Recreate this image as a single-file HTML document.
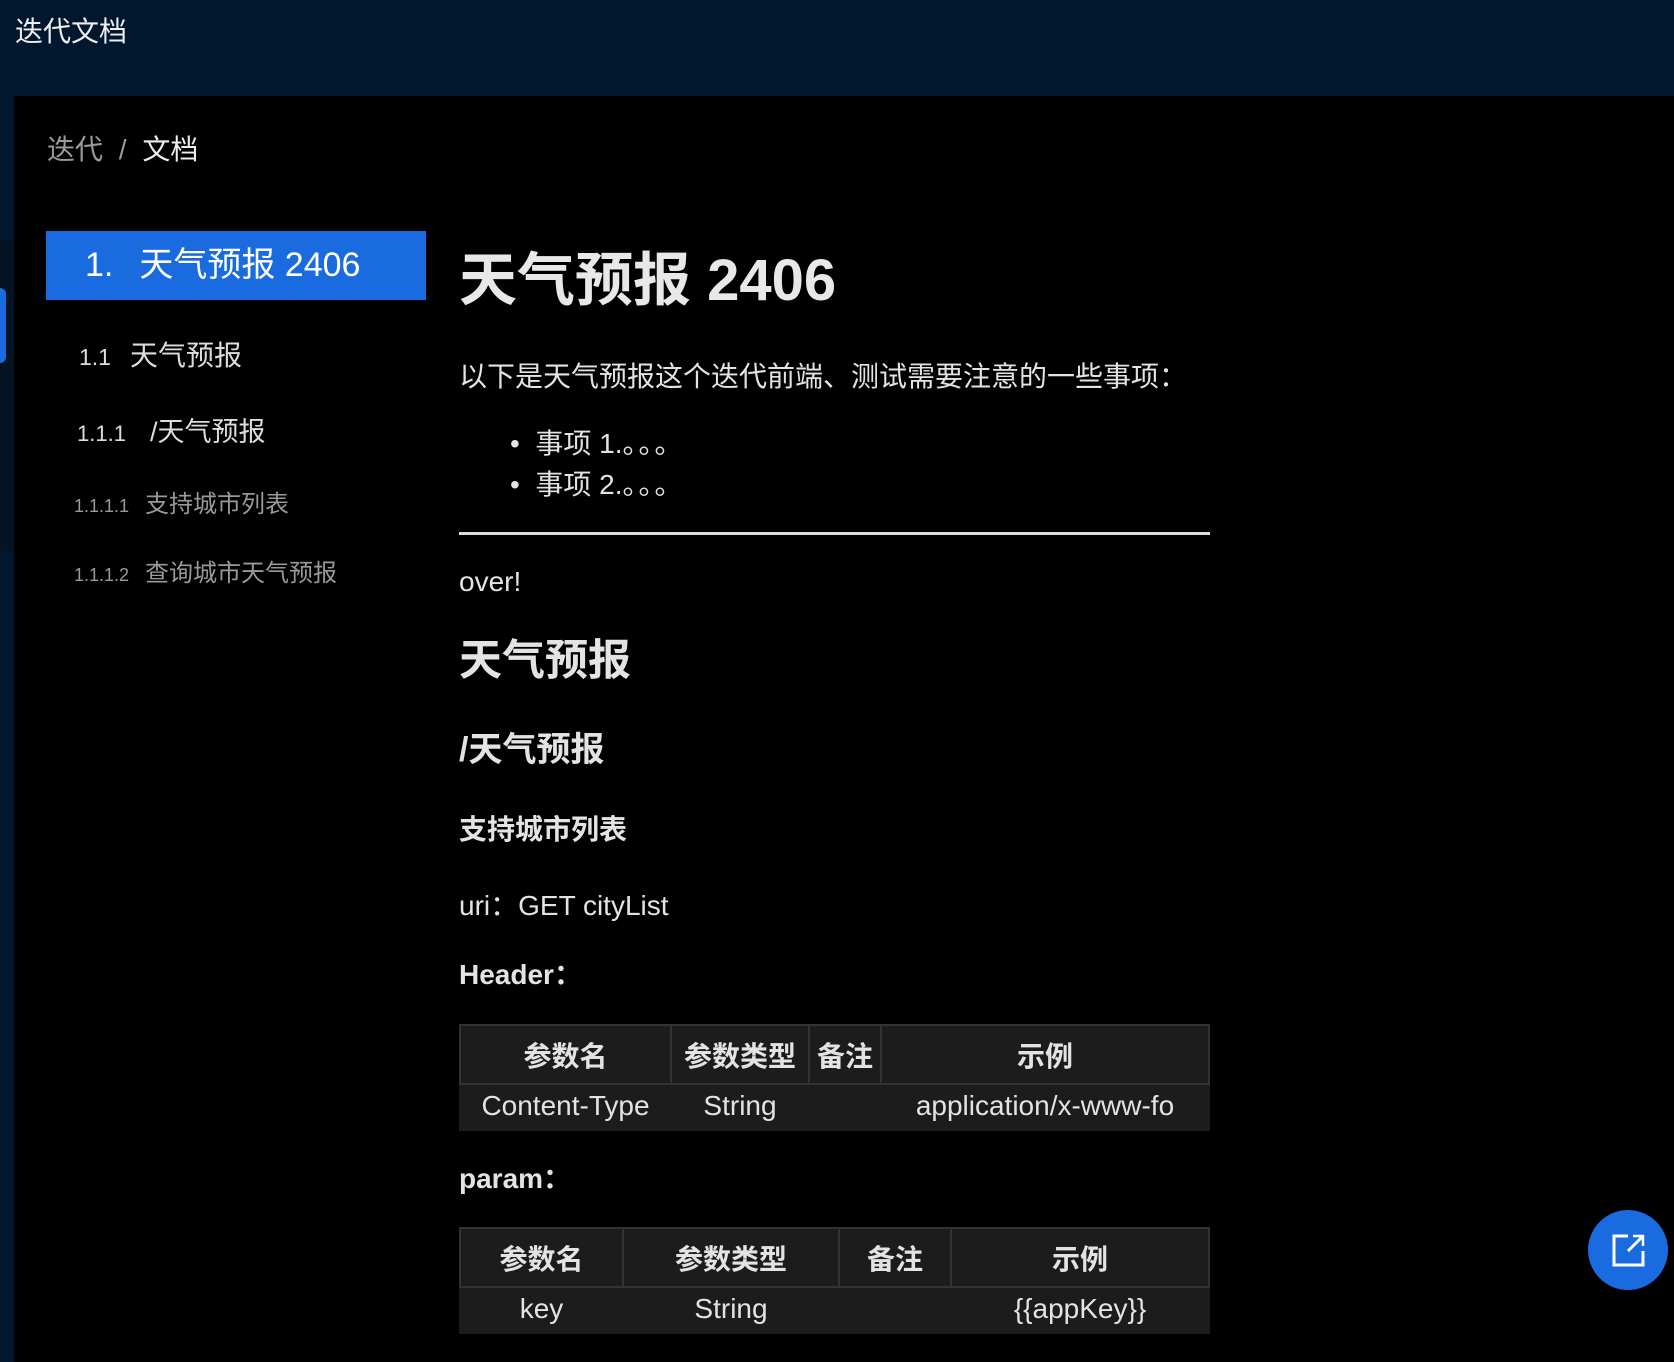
<!DOCTYPE html>
<html><head><meta charset="utf-8"><style>
*{margin:0;padding:0;box-sizing:border-box}
body{width:1674px;height:1362px;background:#00172e;position:relative;overflow:hidden;font-family:"Liberation Sans","Noto Sans CJK SC",sans-serif;color:#e3e3e3}
.a{position:absolute;white-space:nowrap;line-height:1}
#main{position:absolute;left:14px;top:96px;width:1660px;height:1266px;background:#000}
.tb{position:absolute;left:459px;width:751px;background:#1c1c1c;border-collapse:collapse;font-size:28px;color:#e3e3e3}
.tb th{border:2px solid #333;height:59px;font-weight:bold;text-align:center}
.tb td{height:47px;text-align:center;padding-bottom:4px}
</style></head><body>
<div class="a" style="left:15px;top:18px;font-size:28px;color:#eee">迭代文档</div>
<div style="position:absolute;left:0;top:240px;width:14px;height:310px;background:#051423"></div>
<div style="position:absolute;left:0;top:288px;width:6px;height:75px;background:#1a6ae0;border-radius:0 6px 6px 0"></div>
<div style="position:absolute;left:0;top:1290px;width:14px;height:72px;background:#00172e"></div>
<div id="main"></div>
<div class="a" style="left:47px;top:136px;font-size:28px;color:#9a9a9a">迭代 <span style="margin:0 8px">/</span> <span style="color:#eee">文档</span></div>
<div style="position:absolute;left:46px;top:231px;width:380px;height:69px;background:#1a6ae0"></div>
<div class="a" style="left:85px;top:248px;font-size:34px;color:#fff">1.<span style="margin-left:26px">天气预报 2406</span></div>
<div class="a" style="left:79px;top:342px;font-size:28px;color:#ddd"><span style="font-size:23px">1.1</span><span style="margin-left:19px">天气预报</span></div>
<div class="a" style="left:77px;top:419px;font-size:27px;color:#ddd"><span style="font-size:22px">1.1.1</span><span style="margin-left:24px">/天气预报</span></div>
<div class="a" style="left:74px;top:493px;font-size:24px;color:#999"><span style="font-size:18px">1.1.1.1</span><span style="margin-left:16px">支持城市列表</span></div>
<div class="a" style="left:74px;top:562px;font-size:24px;color:#999"><span style="font-size:18px">1.1.1.2</span><span style="margin-left:16px">查询城市天气预报</span></div>

<div class="a" style="left:459px;top:252px;font-size:58px;font-weight:bold;color:#e8e8e8">天气预报 2406</div>
<div class="a" style="left:459px;top:363px;font-size:28px">以下是天气预报这个迭代前端、测试需要注意的一些事项：</div>
<div class="a" style="left:510px;top:430px;font-size:28px">•&nbsp; 事项 1.<span style="letter-spacing:2px">。。。</span></div>
<div class="a" style="left:510px;top:471px;font-size:28px">•&nbsp; 事项 2.<span style="letter-spacing:2px">。。。</span></div>
<div style="position:absolute;left:459px;top:532px;width:751px;height:3px;background:#ddd"></div>
<div class="a" style="left:459px;top:568px;font-size:28px">over!</div>
<div class="a" style="left:459px;top:640px;font-size:43px;font-weight:bold">天气预报</div>
<div class="a" style="left:459px;top:733px;font-size:34px;font-weight:bold">/天气预报</div>
<div class="a" style="left:459px;top:816px;font-size:28px;font-weight:bold">支持城市列表</div>
<div class="a" style="left:459px;top:892px;font-size:28px">uri：GET cityList</div>
<div class="a" style="left:459px;top:961px;font-size:28px;font-weight:bold">Header：</div>
<table class="tb" style="top:1024px">
<tr><th style="width:211px">参数名</th><th style="width:138px">参数类型</th><th style="width:72px">备注</th><th>示例</th></tr>
<tr><td>Content-Type</td><td>String</td><td></td><td>application/x-www-fo</td></tr>
</table>
<div class="a" style="left:459px;top:1165px;font-size:28px;font-weight:bold">param：</div>
<table class="tb" style="top:1227px">
<tr><th style="width:163px">参数名</th><th style="width:216px">参数类型</th><th style="width:112px">备注</th><th>示例</th></tr>
<tr><td>key</td><td>String</td><td></td><td>{{appKey}}</td></tr>
</table>
<div style="position:absolute;left:1588px;top:1210px;width:80px;height:80px;border-radius:50%;background:#1a6ae0"></div>
<svg style="position:absolute;left:1612px;top:1233px" width="34" height="34" viewBox="0 0 34 34" fill="none" stroke="#fff" stroke-width="3">
<path d="M16 3H2V32H31V18"/><path d="M16 18L30 4"/><path d="M21 3H31V13" stroke-width="2.5"/>
</svg>
</body></html>
